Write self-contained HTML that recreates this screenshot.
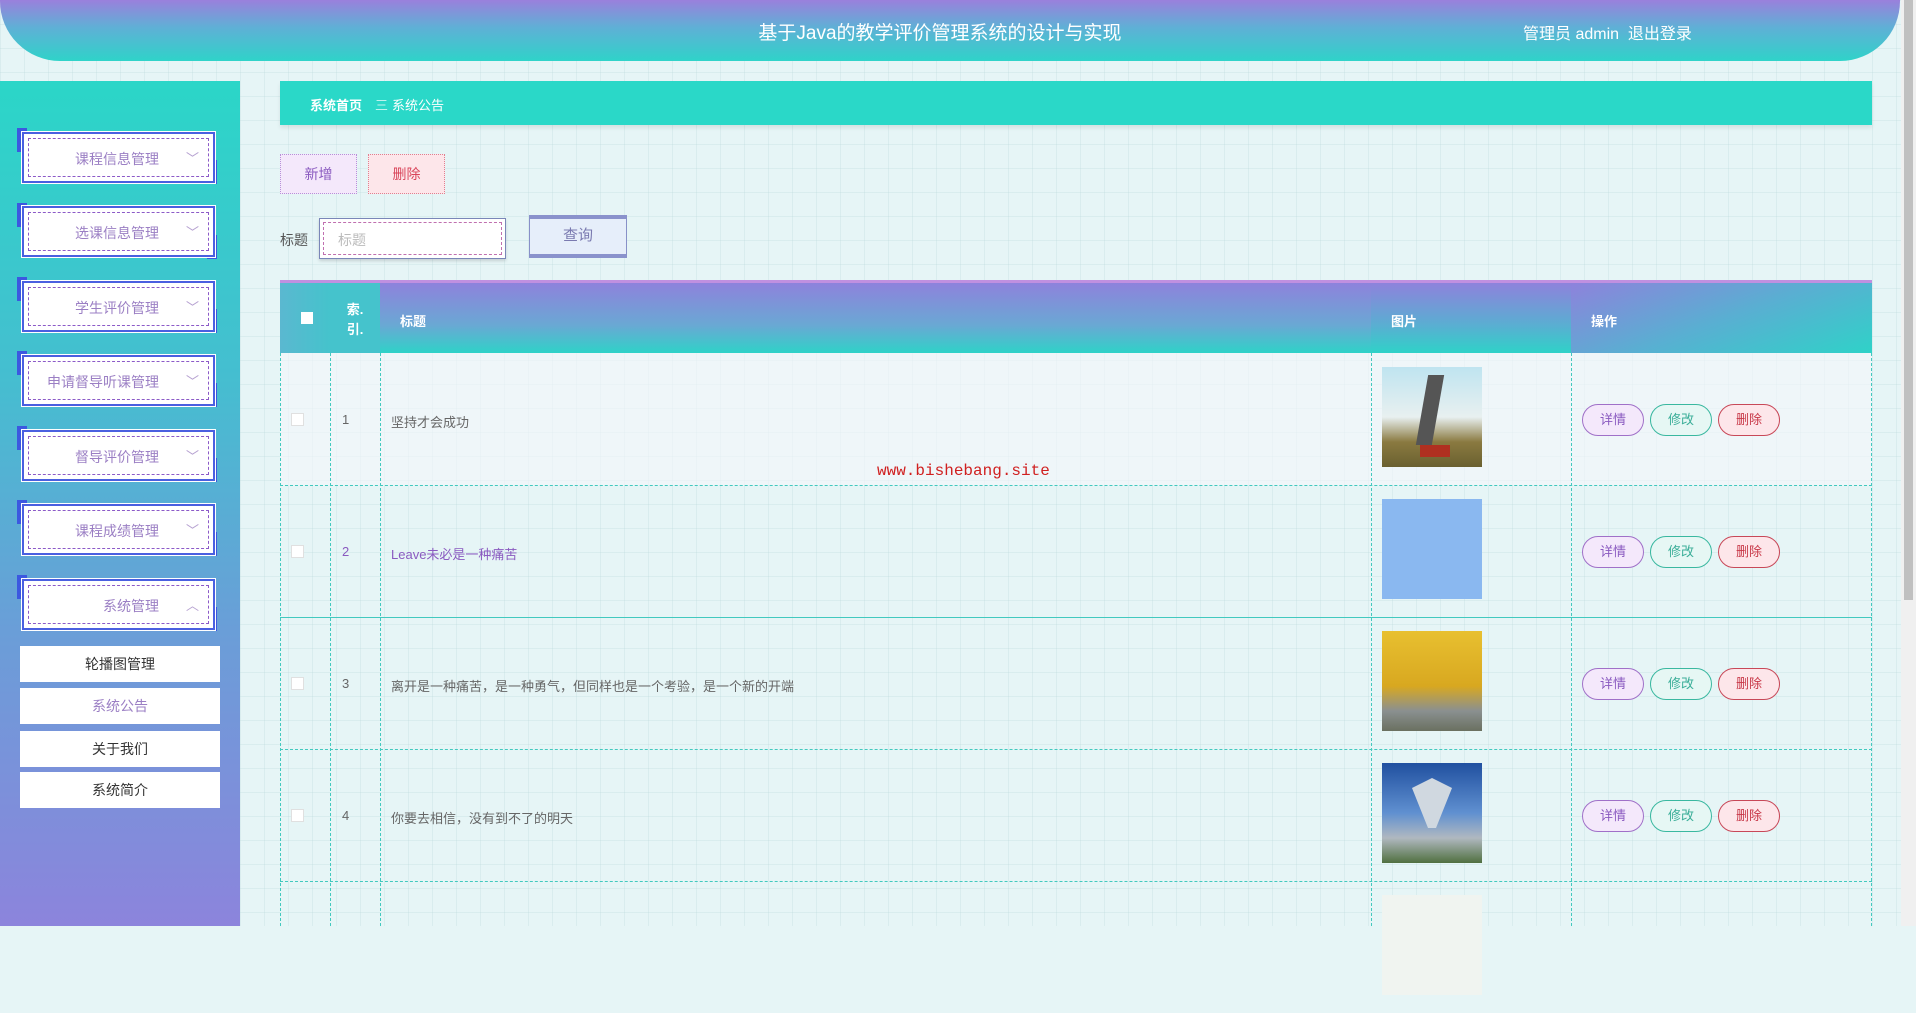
<!DOCTYPE html>
<html><head><meta charset="utf-8"><style>
*{margin:0;padding:0;box-sizing:border-box}
html{background:#e6f5f6}
body{width:1916px;height:926px;overflow:hidden;position:relative;font-family:"Liberation Sans","Noto Sans CJK SC",sans-serif;background:#e6f5f6;
background-image:linear-gradient(rgba(180,210,215,.25) 1px,transparent 1px),linear-gradient(90deg,rgba(180,210,215,.25) 1px,transparent 1px);background-size:24px 24px}
.hdr{position:absolute;left:0;top:0;width:1900px;height:61px;border-radius:0 0 60px 60px;background:linear-gradient(180deg,#9a80dc 0%,#5fb0d6 45%,#2fd3c9 100%)}
.hdr .t{position:absolute;left:0;width:1880px;text-align:center;top:18px;color:#fff;font-size:19px}
.hdr .r{position:absolute;left:1523px;top:20px;color:#fff;font-size:16px}
.side{position:absolute;left:0;top:81px;width:240px;height:845px;background:linear-gradient(180deg,#2bd6c8 0%,#45bed0 35%,#6a9ed8 65%,#8c84dc 100%)}
.mi{position:absolute;left:22px;width:193px;height:51px;background:#fff;border:2px solid #4a5fe0;box-shadow:0 0 0 1px #fff}
.mi:before{content:"";position:absolute;left:4px;top:4px;right:4px;bottom:4px;border:1px dashed #8c5ac8}
.mi span{position:absolute;left:0;right:30px;top:15px;text-align:right;padding-right:24px;color:#9b7fc4;font-size:14px}
.mi i{position:absolute;right:14px;top:14px;color:#b5a0d0;font-style:normal;font-size:13px}
.cl{position:absolute;left:17px;width:10px;height:24px;background:#3c58e0}
.cr{position:absolute;left:207px;width:10px;height:24px;background:#3c58e0}
.sub{position:absolute;left:20px;width:200px;height:36px;background:#fff;text-align:center;line-height:36px;font-size:14px;color:#333}
.bc{position:absolute;left:280px;top:81px;width:1592px;height:44px;background:#2ad8c8;box-shadow:0 3px 4px rgba(0,0,0,.08)}
.bc span{position:absolute;top:14px;font-size:13px;color:#fff}
.btn{position:absolute;top:154px;height:40px;width:77px;text-align:center;line-height:38px;font-size:14px;border:1px dotted}
.th{position:absolute;top:283px;height:70px;color:#fff;font-size:13px;font-weight:bold}
.col{position:absolute;top:353px;height:573px;border-left:1px dashed #42c9bf}
.row{position:absolute;left:280px;width:1592px;height:132px;border-top:1px dashed #42c9bf}
.cell{position:absolute;font-size:13px;color:#666}
.ob{position:absolute;width:62px;height:32px;border-radius:16px;border:1px solid;text-align:center;line-height:30px;font-size:13px}
.img{position:absolute;left:1382px;width:100px;height:100px}
</style></head><body>
<div class="hdr"><div class="t">基于Java的教学评价管理系统的设计与实现</div><div class="r">管理员 admin &nbsp;退出登录</div></div>
<div class="side"></div>

<div class="cl" style="top:128px"></div><div class="cr" style="top:160px"></div><div class="mi" style="top:132px"><span>课程信息管理</span><i>﹀</i></div>
<div class="cl" style="top:203px"></div><div class="cr" style="top:235px"></div><div class="mi" style="top:206px"><span>选课信息管理</span><i>﹀</i></div>
<div class="cl" style="top:277px"></div><div class="cr" style="top:309px"></div><div class="mi" style="top:281px"><span>学生评价管理</span><i>﹀</i></div>
<div class="cl" style="top:351px"></div><div class="cr" style="top:383px"></div><div class="mi" style="top:355px"><span>申请督导听课管理</span><i>﹀</i></div>
<div class="cl" style="top:426px"></div><div class="cr" style="top:458px"></div><div class="mi" style="top:430px"><span>督导评价管理</span><i>﹀</i></div>
<div class="cl" style="top:500px"></div><div class="cr" style="top:532px"></div><div class="mi" style="top:504px"><span>课程成绩管理</span><i>﹀</i></div>
<div class="cl" style="top:575px"></div><div class="cr" style="top:607px"></div><div class="mi" style="top:579px"><span>系统管理</span><i>︿</i></div>
<div class="sub" style="top:646px">轮播图管理</div>
<div class="sub" style="top:688px;color:#9b7fc4">系统公告</div>
<div class="sub" style="top:731px">关于我们</div>
<div class="sub" style="top:772px">系统简介</div>

<div class="bc"><span style="left:30px;font-weight:bold">系统首页</span><span style="left:95px;opacity:.7">三</span><span style="left:112px">系统公告</span></div>
<div class="btn" style="left:280px;background:#f4e8fb;color:#8a5ac0;border-color:#b890d8">新增</div>
<div class="btn" style="left:368px;background:#fde6ea;color:#d9455a;border-color:#e08090">删除</div>
<div style="position:absolute;left:280px;top:230px;font-size:14px;color:#555">标题</div>
<div style="position:absolute;left:319px;top:218px;width:187px;height:41px;background:#fff;border:1px solid #7a86b8;box-shadow:0 2px 3px rgba(0,0,0,.15)"><div style="position:absolute;inset:3px;border:1px dashed #c070b0"></div><span style="position:absolute;left:18px;top:11px;font-size:14px;color:#bbb">标题</span></div>
<div style="position:absolute;left:529px;top:215px;width:98px;height:43px;background:#e6eefa;border:1px solid #8890c8;border-top:4px solid #8a92cc;border-bottom:4px solid #8a92cc;text-align:center;line-height:34px;font-size:15px;color:#7a7ab0">查询</div>

<div style="position:absolute;left:280px;top:280px;width:1592px;height:4px;background:#c090e0"></div>
<div class="th" style="left:280px;width:50px;background:linear-gradient(90deg,#5ab8d0,#45c3cc);"><div style="position:absolute;left:21px;top:29px;width:12px;height:12px;background:#fff"></div></div>
<div class="th" style="left:330px;width:50px;background:#45c3cc;text-align:center;padding-top:17px;line-height:20px">索.<br>引.</div>
<div class="th" style="left:380px;width:991px;background:linear-gradient(180deg,#8e82dc,#6aa8d4 60%,#2fd2c8);"><span style="position:absolute;left:20px;top:28px">标题</span></div>
<div class="th" style="left:1371px;width:200px;background:linear-gradient(180deg,#8e82dc,#5aaed2 60%,#2fd2c8)"><span style="position:absolute;left:20px;top:28px">图片</span></div>
<div class="th" style="left:1571px;width:301px;background:linear-gradient(160deg,#8e82dc,#5aaed2 50%,#2fd2c8)"><span style="position:absolute;left:20px;top:28px">操作</span></div>

<div class="row" style="top:353px;border-top:none;background:rgba(245,247,252,.6)"></div>
<div class="row" style="top:485px"></div>
<div class="row" style="top:617px;border-top:1px solid #42c9bf"></div>
<div class="row" style="top:749px"></div>
<div class="row" style="top:881px"></div>
<div class="col" style="left:280px"></div><div class="col" style="left:330px"></div><div class="col" style="left:380px"></div><div class="col" style="left:1371px"></div><div class="col" style="left:1571px"></div><div class="col" style="left:1871px"></div>

<div class="cell" style="left:291px;top:413px;width:13px;height:13px;background:#fff;border:1px solid #e0e0e0"></div>
<div class="cell" style="left:291px;top:545px;width:13px;height:13px;background:#fff;border:1px solid #e0e0e0"></div>
<div class="cell" style="left:291px;top:677px;width:13px;height:13px;background:#fff;border:1px solid #e0e0e0"></div>
<div class="cell" style="left:291px;top:809px;width:13px;height:13px;background:#fff;border:1px solid #e0e0e0"></div>
<div class="cell" style="left:342px;top:412px">1</div><div class="cell" style="left:391px;top:412px">坚持才会成功</div>
<div class="cell" style="left:342px;top:544px;color:#8a5ac0">2</div><div class="cell" style="left:391px;top:544px;color:#8a5ac0">Leave未必是一种痛苦</div>
<div class="cell" style="left:342px;top:676px">3</div><div class="cell" style="left:391px;top:676px">离开是一种痛苦，是一种勇气，但同样也是一个考验，是一个新的开端</div>
<div class="cell" style="left:342px;top:808px">4</div><div class="cell" style="left:391px;top:808px">你要去相信，没有到不了的明天</div>

<div class="img" style="top:367px;background:linear-gradient(180deg,#bfe4f0 0,#e8f0f0 50%,#8a7a40 75%,#6a6030 100%)"><div style="position:absolute;left:40px;top:8px;width:16px;height:70px;background:#555;transform:skew(-10deg)"></div><div style="position:absolute;left:38px;top:78px;width:30px;height:12px;background:#b03020"></div></div>
<div class="img" style="top:499px;background:#8ab8f0"></div>
<div class="img" style="top:631px;background:linear-gradient(180deg,#e8c030 0,#d8a820 55%,#8a9090 80%,#6a7060 100%)"></div>
<div class="img" style="top:763px;background:linear-gradient(180deg,#2050a0 0,#6090d0 50%,#b0b8c0 75%,#507040 100%)"><div style="position:absolute;left:30px;top:15px;width:40px;height:50px;background:#d0d8e0;clip-path:polygon(50% 0,100% 20%,60% 100%,40% 100%,0 20%)"></div></div>
<div class="img" style="top:895px;background:#f0f4f0"></div>

<div class="ob" style="left:1582px;top:404px;background:#f4e8fb;color:#8a5ac0;border-color:#a070c8">详情</div>
<div class="ob" style="left:1650px;top:404px;background:#e6f7f4;color:#3aae98;border-color:#3ab8a0">修改</div>
<div class="ob" style="left:1718px;top:404px;background:#fde6ea;color:#c83848;border-color:#c84858">删除</div>
<div class="ob" style="left:1582px;top:536px;background:#f4e8fb;color:#8a5ac0;border-color:#a070c8">详情</div>
<div class="ob" style="left:1650px;top:536px;background:#e6f7f4;color:#3aae98;border-color:#3ab8a0">修改</div>
<div class="ob" style="left:1718px;top:536px;background:#fde6ea;color:#c83848;border-color:#c84858">删除</div>
<div class="ob" style="left:1582px;top:668px;background:#f4e8fb;color:#8a5ac0;border-color:#a070c8">详情</div>
<div class="ob" style="left:1650px;top:668px;background:#e6f7f4;color:#3aae98;border-color:#3ab8a0">修改</div>
<div class="ob" style="left:1718px;top:668px;background:#fde6ea;color:#c83848;border-color:#c84858">删除</div>
<div class="ob" style="left:1582px;top:800px;background:#f4e8fb;color:#8a5ac0;border-color:#a070c8">详情</div>
<div class="ob" style="left:1650px;top:800px;background:#e6f7f4;color:#3aae98;border-color:#3ab8a0">修改</div>
<div class="ob" style="left:1718px;top:800px;background:#fde6ea;color:#c83848;border-color:#c84858">删除</div>

<div style="position:absolute;left:877px;top:462px;font-family:'Liberation Mono',monospace;font-size:16px;color:#d02020">www.bishebang.site</div>
<div style="position:absolute;left:1901px;top:0;width:15px;height:926px;background:#f0f0f0"><div style="position:absolute;left:3px;top:0;width:9px;height:600px;background:#c0c0c0"></div></div>
</body></html>
